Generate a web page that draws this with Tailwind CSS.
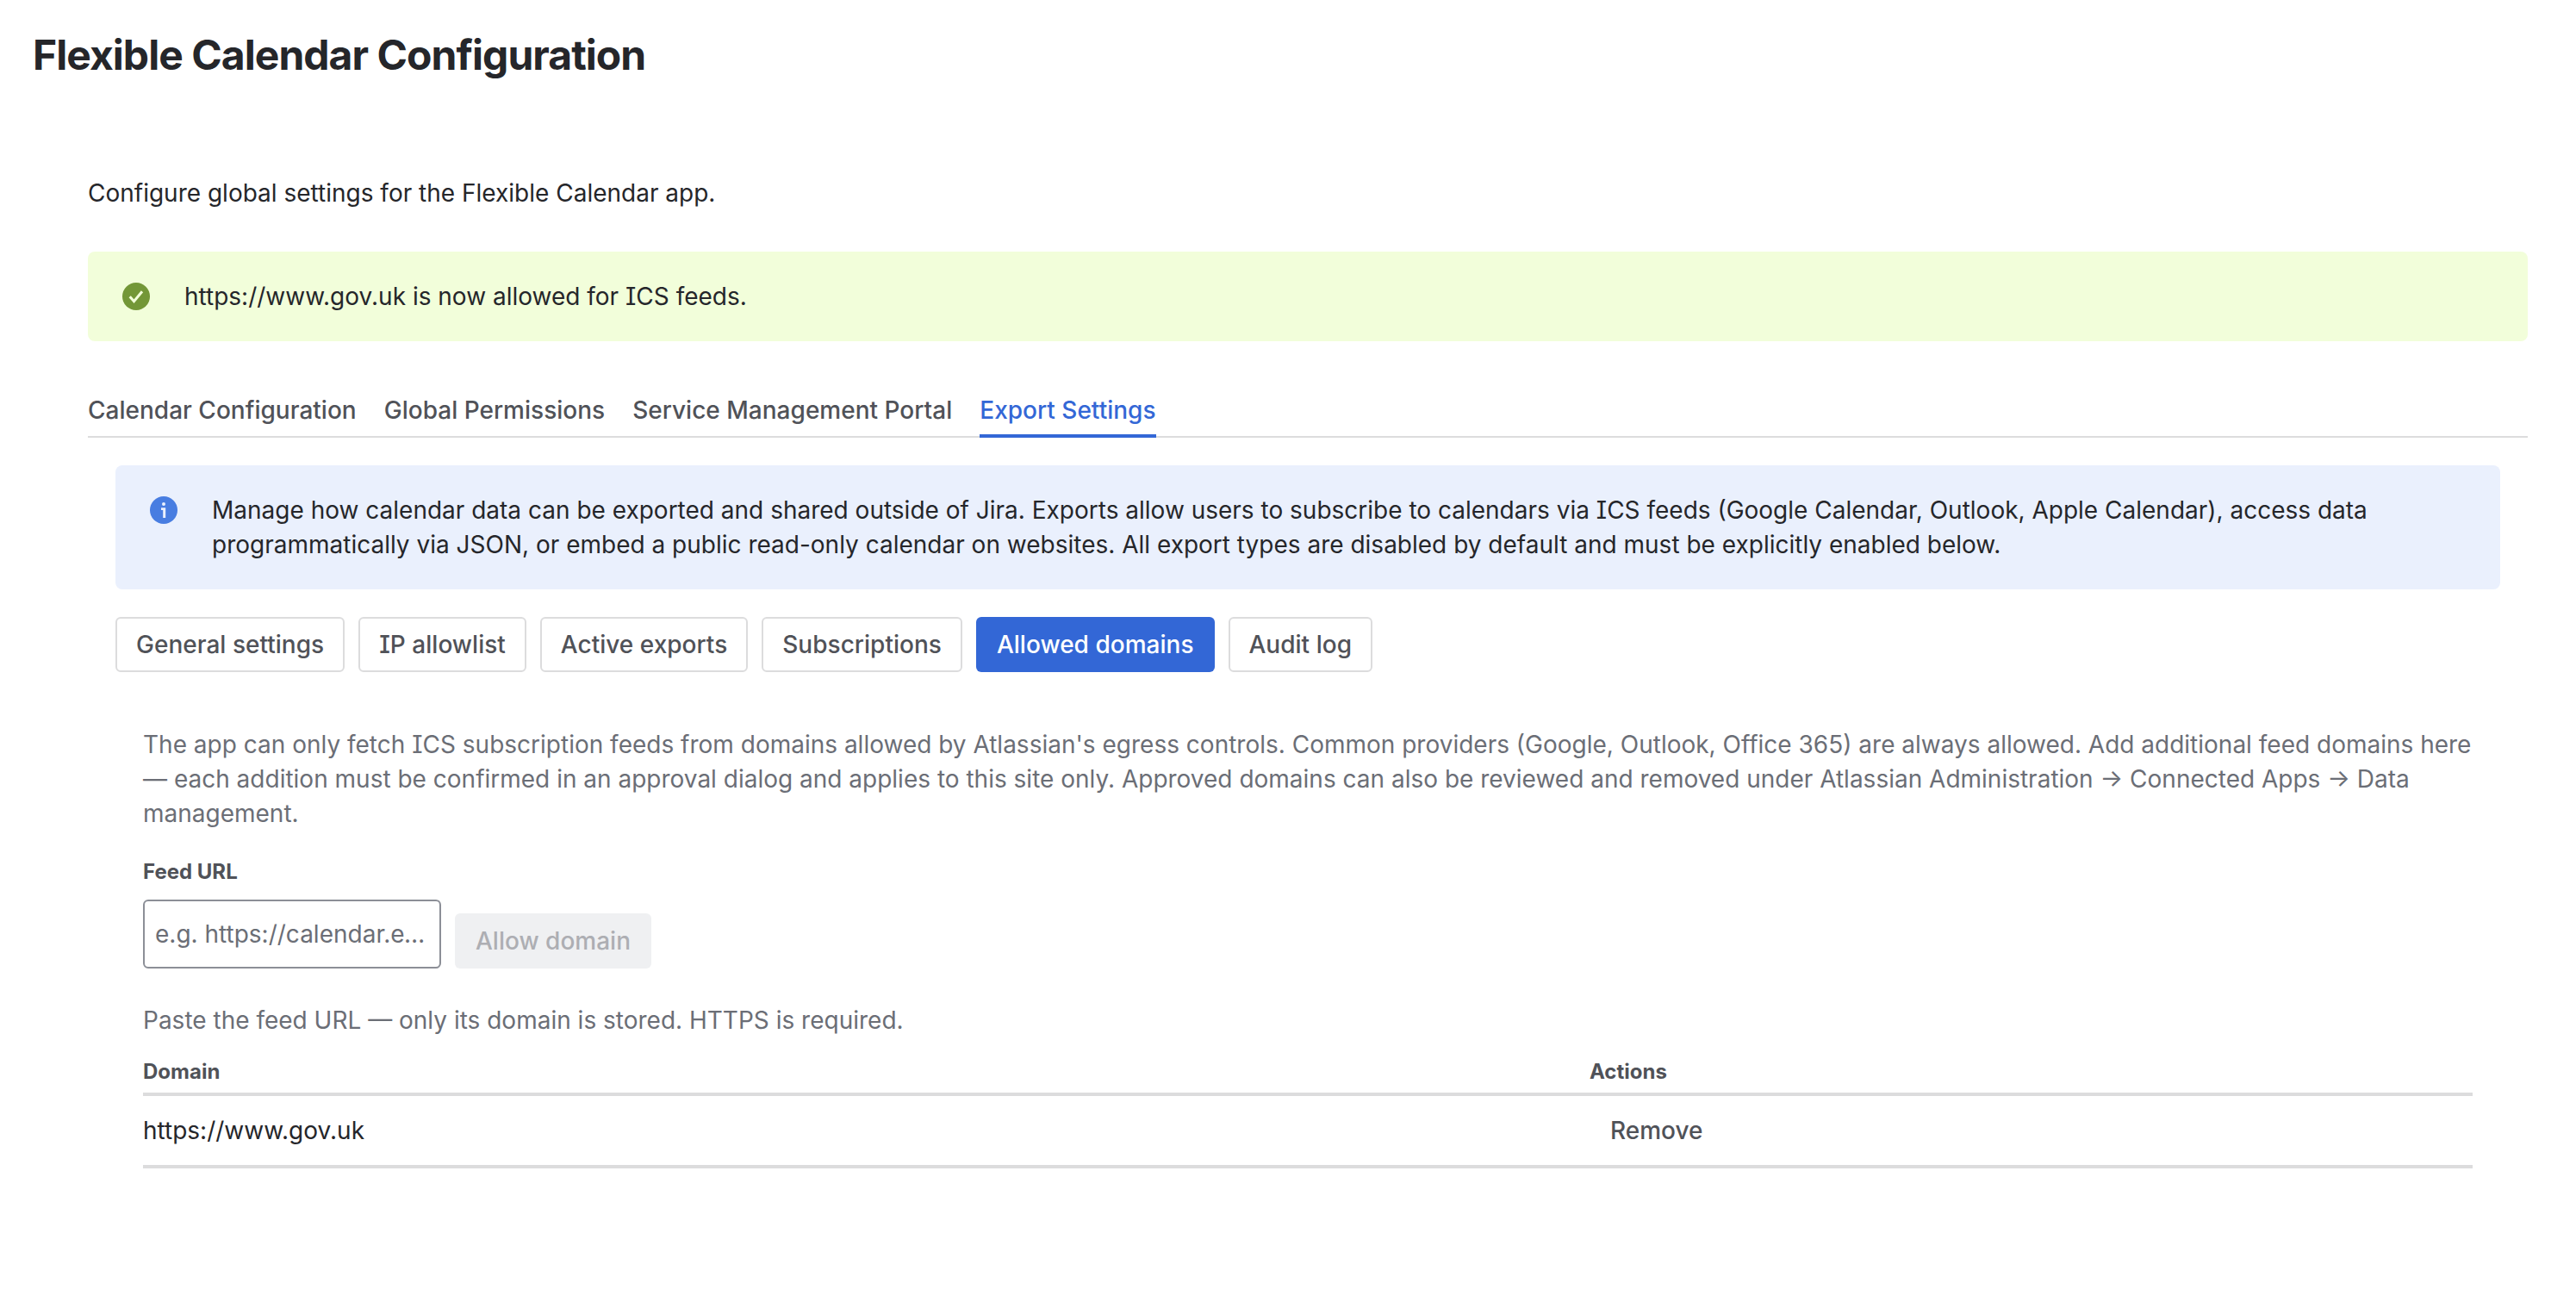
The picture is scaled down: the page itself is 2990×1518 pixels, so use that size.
<!DOCTYPE html>
<html lang="en"><head><meta charset="utf-8"><title>Flexible Calendar Configuration</title>
<script src="https://cdn.jsdelivr.net/npm/@tailwindcss/browser@4"></script></head>
<body class="bg-white font-['Inter',sans-serif] text-[28px] leading-[40px] text-[#25262a] [font-feature-settings:'cv08']">
<h1 class="pl-[38px] pt-[36px] text-[48px] leading-[56px] font-[653] tracking-[-0.96px]">Flexible Calendar Configuration</h1>
<main class="pl-[102px] pr-[56px] pt-[112px]">
<p>Configure global settings for the Flexible Calendar app.</p>
<div class="mt-[48px] flex h-[104px] items-center rounded-[8px] bg-[#f2feda] pl-[40px]">
<svg class="h-8 w-8" viewBox="0 0 32 32" fill="none"><circle cx="16" cy="16" r="16" fill="#739737"/><path d="M8.700 16.300L13.500 21.800L23 10.200" stroke="#f2feda" stroke-width="3"/></svg>
<span class="ml-[40px]">https://www.gov.uk is now allowed for ICS feeds.</span></div>
<nav class="mt-[48px] flex h-[64px] gap-[32px] border-b-2 border-[#dcdcdd] pt-[12px] font-medium tracking-[0.01px] text-[#505258]">
<span>Calendar Configuration</span><span>Global Permissions</span><span>Service Management Portal</span><span class="h-[52px] border-b-4 border-[#3367d6] text-[#3367d6]">Export Settings</span></nav>
<section class="px-[32px] pt-[32px]">
<div class="flex h-[144px] rounded-[8px] bg-[#eaf0fd] pl-[40px] pt-[32px]">
<svg class="mt-1 h-8 w-8 shrink-0" viewBox="0 0 32 32"><circle cx="16" cy="16" r="16" fill="#487de1"/><path d="M13 13.300h5.200V25h-3v-9H13z" fill="#eaf0fd"/><circle cx="16" cy="9" r="2" fill="#eaf0fd"/></svg>
<p class="ml-[40px] w-[2560px]">Manage how calendar data can be exported and shared outside of Jira. Exports allow users to subscribe to calendars via ICS feeds (Google Calendar, Outlook, Apple Calendar), access data<br>programmatically via JSON, or embed a public read-only calendar on websites. All export types are disabled by default and must be explicitly enabled below.</p></div>
<div class="mt-[32px] flex gap-[16px] font-medium tracking-[0.015px] text-[#505258]">
<button class="h-[64px] rounded-[6px] border-2 border-[#dcdcdd] px-[22px]">General settings</button>
<button class="h-[64px] rounded-[6px] border-2 border-[#dcdcdd] px-[22px]">IP allowlist</button>
<button class="h-[64px] rounded-[6px] border-2 border-[#dcdcdd] px-[22px]">Active exports</button>
<button class="h-[64px] rounded-[6px] border-2 border-[#dcdcdd] px-[22px]">Subscriptions</button>
<button class="h-[64px] rounded-[6px] bg-[#3367d6] px-[24px] text-white">Allowed domains</button>
<button class="h-[64px] rounded-[6px] border-2 border-[#dcdcdd] px-[22px]">Audit log</button>
</div>
<div class="px-[32px] pt-[64px] text-[#6b6e76]">
<p class="whitespace-nowrap">The app can only fetch ICS subscription feeds from domains allowed by Atlassian's egress controls. Common providers (Google, Outlook, Office 365) are always allowed. Add additional feed domains here<br>— each addition must be confirmed in an approval dialog and applies to this site only. Approved domains can also be reviewed and removed under Atlassian Administration → Connected Apps → Data<br>management.</p>
<label for="feed-url" class="mt-[32px] block text-[24px] leading-[32px] font-[653] text-[#505258]">Feed URL</label>
<div class="mt-[16px] flex items-end gap-[16px]">
<input id="feed-url" type="text" placeholder="e.g. https://calendar.example.com/feed.ics" class="h-[80px] w-[346px] rounded-[6px] border-2 border-[#8c8f97] px-[12px] text-ellipsis placeholder:text-[#6b6e76]">
<button class="h-[64px] rounded-[6px] bg-[#eff0f2] px-[24px] font-medium text-[#adaeb3]">Allow domain</button>
</div>
<p class="mt-[40px]">Paste the feed URL — only its domain is stored. HTTPS is required.</p>
<table class="mt-[24px] w-full table-fixed border-collapse text-left">
<colgroup><col class="w-[1679px]"><col></colgroup>
<thead><tr class="h-[42px] border-b-4 border-[#dcdcdd] text-[24px] leading-[32px] text-[#505258]"><th class="p-0 pb-[8px] font-[653]">Domain</th><th class="p-0 pb-[8px] font-[653]">Actions</th></tr></thead>
<tbody><tr class="h-[84px] border-b-4 border-[#dcdcdd]"><td class="p-0 text-[#25262a]">https://www.gov.uk</td><td class="p-0 pl-[24px] font-medium text-[#505258]">Remove</td></tr></tbody>
</table>
</div>
</section></main></body></html>
